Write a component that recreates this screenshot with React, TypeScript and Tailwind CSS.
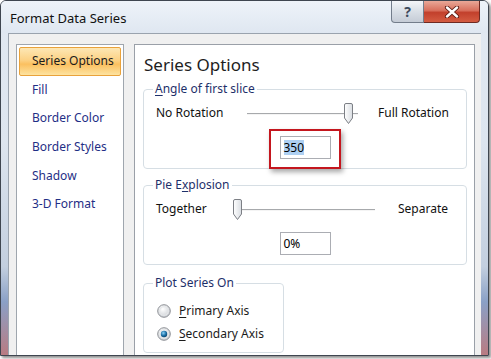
import React from 'react';

const font = { fontFamily: '"Noto Sans", "Open Sans", sans-serif' };

const navItems = ['Series Options', 'Fill', 'Border Color', 'Border Styles', 'Shadow', '3-D Format'];

function Thumb() {
  return (
    <svg width="11" height="23" viewBox="0 0 11 23" className="block">
      <defs>
        <linearGradient id="thumbFill" x1="0" x2="1" y1="0" y2="0">
          <stop offset="0" stopColor="#ffffff" />
          <stop offset="1" stopColor="#d9dde2" />
        </linearGradient>
      </defs>
      <path d="M1.5 3 Q1.5 1.5 3 1.5 H8 Q9.5 1.5 9.5 3 V16 L5.5 21.5 L1.5 16 Z" fill="url(#thumbFill)" stroke="#7c7f85" />
    </svg>
  );
}

function Slider({ width, thumbAt }: { width: number; thumbAt: number }) {
  return (
    <div className="relative h-[23px]" style={{ width }}>
      <div className="absolute left-0 right-0 top-[11px] h-px bg-[#a7a9ac]" />
      <div className="absolute left-0 right-0 top-[12px] h-px bg-[#f4f4f4]" />
      <div className="absolute top-0" style={{ left: thumbAt }}>
        <Thumb />
      </div>
    </div>
  );
}

function TextBox({ value, selected }: { value: string; selected?: boolean }) {
  return (
    <div className="flex h-[23px] w-[51px] items-center border border-[#abadb3] bg-white pl-[3px] text-[12px] text-black">
      {selected ? <span className="bg-[#aed0f2] leading-[15px]">{value}</span> : value}
    </div>
  );
}

function Radio({ id, checked, label, mnemonic }: { id: string; checked?: boolean; label: string; mnemonic: string }) {
  return (
    <div className="flex h-[23px] items-center">
      <svg width="14" height="14" viewBox="0 0 14 14" className="ml-[13px] block">
        <defs>
          <radialGradient id={`ring-${id}`} cx="0.4" cy="0.35" r="0.7">
            <stop offset="0" stopColor="#ffffff" />
            <stop offset="1" stopColor="#c9cdd2" />
          </radialGradient>
          <radialGradient id={`dot-${id}`} cx="0.4" cy="0.35" r="0.7">
            <stop offset="0" stopColor="#8ad0f5" />
            <stop offset="0.6" stopColor="#1a6ea5" />
            <stop offset="1" stopColor="#0b3f66" />
          </radialGradient>
        </defs>
        <circle cx="7" cy="7" r="6.3" fill={`url(#ring-${id})`} stroke="#8e9196" />
        <circle cx="7" cy="7" r="4.3" fill="none" stroke="#e6e8ea" />
        {checked && <circle cx="7" cy="7" r="3.2" fill={`url(#dot-${id})`} />}
      </svg>
      <span className="ml-[8px] text-[12px] text-[#1b1b1b]">
        <span className="underline underline-offset-2">{mnemonic}</span>
        {label.slice(mnemonic.length)}
      </span>
    </div>
  );
}

export default function App() {
  return (
    <div className="h-[359px] w-[491px] overflow-hidden bg-white" style={font}>
      <div className="h-[356px] w-[489px] overflow-hidden rounded-t-[6px] border border-[#3f4650] bg-[linear-gradient(180deg,#e2e9f2_0%,#dde5ef_40%,#c3cfdf_75%,#8aa0c6_85%,#b97b82_100%)] shadow-[2px_2px_3px_rgba(0,0,0,0.45)]">
        <div className="flex h-[32px] items-start bg-[linear-gradient(180deg,#eef3f9,#dfe7f1)]">
          <span className="mt-[8px] ml-[9px] text-[13px] leading-[18px] text-[#111]">Format Data Series</span>
          <div className="ml-auto mr-[8px] flex">
            <div className="flex h-[22px] w-[33px] items-center justify-center rounded-bl-[4px] border border-t-0 border-[#737d8b] bg-[linear-gradient(180deg,#f4f6f9,#d9dfe6_50%,#c5ccd6)] text-[14px] font-bold text-[#3d4a5c]">
              ?
            </div>
            <div className="flex h-[22px] w-[56px] items-center justify-center rounded-br-[4px] border border-l-0 border-t-0 border-[#6e2a22] bg-[linear-gradient(180deg,#e9a898,#d8705d_45%,#c2402c_55%,#d45c42)]">
              <svg width="16" height="12" viewBox="0 0 16 12">
                <path d="M3 1.5 L13 10.5 M13 1.5 L3 10.5" stroke="#5a1a12" strokeWidth="4.2" strokeLinecap="round" />
                <path d="M3 1.5 L13 10.5 M13 1.5 L3 10.5" stroke="#ffffff" strokeWidth="2.4" strokeLinecap="round" />
              </svg>
            </div>
          </div>
        </div>

        <div className="ml-[7px] mr-[7px] flex h-[330px] gap-[10px] border-l border-t border-[#9aa3ae] bg-[#f0f0f0] pl-[7px] pt-[10px] pr-[6px]">
          <div className="w-[108px] border border-[#9fa6ae] bg-white pl-[2px] pr-[2px] pt-[2px]">
            {navItems.map((item, i) => (
              <div
                key={item}
                className={`flex h-[28.6px] items-center pl-[12px] text-[12px] ${
                  i === 0
                    ? 'rounded-[2px] border border-[#e9a23b] bg-[linear-gradient(180deg,#fde7b5,#fcd184_45%,#fbc060_60%,#fde3a0)] text-[#1b1b1b]'
                    : 'border border-transparent text-[#1f2f86]'
                }`}
              >
                {item}
              </div>
            ))}
          </div>

          <div className="flex-1 border border-[#9aa0a8] bg-white pl-[8px] pr-[7px]">
            <div className="mt-[8px] ml-[1px] text-[17px] leading-[24px] text-[#1e1e1e]">Series Options</div>

            <fieldset className="mt-[4px] h-[88px] rounded-[4px] border border-[#d6dee4] px-[12px]">
              <legend className="ml-[-3px] px-[2px] text-[12px] leading-[16px] text-[#1e2f6a]">
                <span className="underline underline-offset-2">A</span>ngle of first slice
              </legend>
              <div className="mt-[5px] flex h-[22px] items-center text-[12px] text-[#111]">
                <span className="w-[91px]">No Rotation</span>
                <Slider width={111} thumbAt={96} />
                <span className="ml-[20px]">Full Rotation</span>
              </div>
              <div className="mt-[12px] flex justify-center">
                <div className="relative">
                  <TextBox value="350" selected />
                  <span className="absolute -bottom-[10px] -left-[11px] -right-[10px] -top-[7px] border-2 border-[#c4161e] shadow-[2px_3px_5px_rgba(0,0,0,0.35)]" />
                </div>
              </div>
            </fieldset>

            <fieldset className="mt-[8px] h-[88px] rounded-[4px] border border-[#d6dee4] px-[12px]">
              <legend className="ml-[-3px] px-[2px] text-[12px] leading-[16px] text-[#1e2f6a]">
                Pie E<span className="underline underline-offset-2">x</span>plosion
              </legend>
              <div className="mt-[5px] flex h-[22px] items-center text-[12px] text-[#111]">
                <span className="w-[79px]">Together</span>
                <Slider width={140} thumbAt={-3} />
                <span className="ml-[23px]">Separate</span>
              </div>
              <div className="mt-[12px] flex justify-center">
                <TextBox value="0%" />
              </div>
            </fieldset>

            <fieldset className="mt-[10px] h-[78px] w-[141px] rounded-[4px] border border-[#d6dee4]">
              <legend className="ml-[9px] px-[2px] text-[12px] leading-[16px] text-[#1e2f6a]">Plot Series On</legend>
              <div className="mt-[8px]">
                <Radio id="primary" label="Primary Axis" mnemonic="P" />
                <Radio id="secondary" label="Secondary Axis" mnemonic="S" checked />
              </div>
            </fieldset>
          </div>
        </div>
      </div>
    </div>
  );
}
